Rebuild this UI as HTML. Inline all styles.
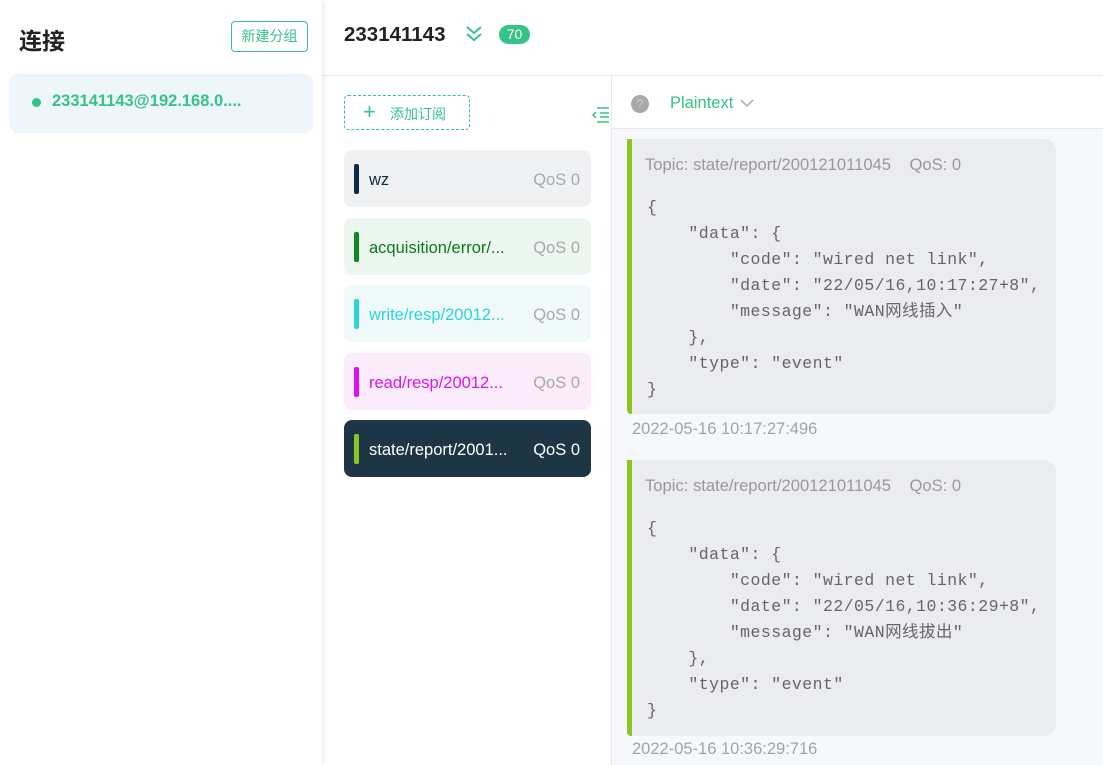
<!DOCTYPE html><html><head><meta charset="utf-8"><style>
*{box-sizing:border-box;margin:0;padding:0}
body{width:1103px;height:765px;overflow:hidden;background:#fff;font-family:"Liberation Sans","Noto Sans CJK SC",sans-serif;position:relative}
.abs{position:absolute}
.left{left:0;top:0;width:322px;height:765px;background:#fff;box-shadow:2px 0 6px rgba(0,0,0,.08);z-index:2}
.sub{position:absolute;left:344px;width:247px;height:57px;border-radius:8px;font-size:16.5px}
.sub .bar{position:absolute;left:10px;top:14px;width:5px;height:30px;border-radius:2px}
.sub .t{position:absolute;left:25px;top:21px}
.sub .q{position:absolute;right:11px;top:21px;color:#a5a9b0}
.card{position:absolute;left:627px;width:429px;background:#ebecf0;border-radius:0 12px 12px 4px;border-left:5px solid #8cc420;color:#8a8e95}
.card .tp{position:absolute;left:13px;top:16px;font-size:16.6px;color:#999}
.card pre{position:absolute;left:15px;top:56px;font-family:"Liberation Mono",monospace;font-size:16.5px;letter-spacing:0.45px;line-height:26px;color:#666;font-weight:normal}
.ts{position:absolute;left:632px;font-size:16.5px;color:#a0a4aa}
</style></head><body>
<div class="abs left">
 <div class="abs" style="left:19px;top:22px;font-size:23px;font-weight:bold;color:#222">连接</div>
 <div class="abs" style="left:231px;top:21px;width:77px;height:31px;border:1px solid #34c388;border-radius:4px;color:#34c388;font-size:14px;line-height:29px;text-align:center">新建分组</div>
 <div class="abs" style="left:9px;top:74px;width:304px;height:59px;background:#eff6f9;border-radius:9px">
  <div class="abs" style="left:23px;top:24px;width:9px;height:9px;border-radius:50%;background:#34c388"></div>
  <div class="abs" style="left:43px;top:18px;font-size:16.5px;font-weight:bold;color:#34c388">233141143@192.168.0....</div>
 </div>
</div>
<div class="abs" style="left:344px;top:23px;font-size:20.5px;font-weight:bold;color:#222">233141143</div>
<svg class="abs" style="left:464px;top:24px" width="20" height="20" viewBox="0 0 20 20"><path d="M3 3l7 6 7-6M3 10l7 6 7-6" fill="none" stroke="#34c388" stroke-width="2"/></svg>
<div class="abs" style="left:499px;top:25px;width:31px;height:19px;border-radius:10px;background:#34c388;color:#fff;font-size:14px;line-height:19px;text-align:center">70</div>
<div class="abs" style="left:322px;top:75px;width:781px;height:1px;background:#e6e8ee"></div>
<div class="abs" style="left:611px;top:76px;width:1px;height:689px;background:#e6e8ee"></div>
<div class="abs" style="left:612px;top:129px;width:491px;height:636px;background:#f7f8fc"></div>
<div class="abs" style="left:612px;top:128px;width:491px;height:1px;background:#e6e8ee"></div>
<div class="abs" style="left:344px;top:95px;width:126px;height:35px;border:1px dashed #34c388;border-radius:4px;color:#34c388;font-size:14px">
 <span class="abs" style="left:18px;top:4px;font-size:22px;line-height:24px">+</span><span class="abs" style="left:45px;top:8px">添加订阅</span></div>
<svg class="abs" style="left:591px;top:106px" width="20" height="18" viewBox="0 0 20 18"><path d="M6 2h12M9 7h9M9 11h9M6 16h12M5 6l-3 3 3 3" fill="none" stroke="#34c388" stroke-width="1.5"/></svg>
<div class="sub" style="top:150px;background:#f0f1f3"><div class="bar" style="background:#0e2a47"></div><div class="t" style="color:#0e2a47">wz</div><div class="q">QoS 0</div></div>
<div class="sub" style="top:218px;background:#ecf7ef"><div class="bar" style="background:#0b8a1e"></div><div class="t" style="color:#0b7a1a">acquisition/error/...</div><div class="q">QoS 0</div></div>
<div class="sub" style="top:285px;background:#f0fafb"><div class="bar" style="background:#2bd5dc"></div><div class="t" style="color:#2bd5dc">write/resp/20012...</div><div class="q">QoS 0</div></div>
<div class="sub" style="top:353px;background:#fcedfc"><div class="bar" style="background:#dd11f5"></div><div class="t" style="color:#dd11f5">read/resp/20012...</div><div class="q">QoS 0</div></div>
<div class="sub" style="top:420px;background:#1e3545"><div class="bar" style="background:#8cc420"></div><div class="t" style="color:#fff">state/report/2001...</div><div class="q" style="color:#fff">QoS 0</div></div>
<div class="abs" style="left:631px;top:95px;width:18px;height:18px;border-radius:50%;background:#a8a8a8;color:#ccc;font-size:12px;text-align:center;line-height:18px">?</div>
<div class="abs" style="left:670px;top:94px;font-size:16.5px;color:#34c388">Plaintext</div>
<svg class="abs" style="left:739px;top:97px" width="16" height="12" viewBox="0 0 16 12"><path d="M2 3l6 6 6-6" fill="none" stroke="#aab" stroke-width="1.5"/></svg>
<div class="card" style="top:139px;height:275px"><div class="tp">Topic: state/report/200121011045&nbsp;&nbsp;&nbsp;&nbsp;QoS: 0</div>
<pre>{
    "data": {
        "code": "wired net link",
        "date": "22/05/16,10:17:27+8",
        "message": "WAN网线插入"
    },
    "type": "event"
}</pre></div>
<div class="ts" style="top:420px">2022-05-16 10:17:27:496</div>
<div class="card" style="top:460px;height:276px"><div class="tp">Topic: state/report/200121011045&nbsp;&nbsp;&nbsp;&nbsp;QoS: 0</div>
<pre>{
    "data": {
        "code": "wired net link",
        "date": "22/05/16,10:36:29+8",
        "message": "WAN网线拔出"
    },
    "type": "event"
}</pre></div>
<div class="ts" style="top:740px">2022-05-16 10:36:29:716</div>
</body></html>
